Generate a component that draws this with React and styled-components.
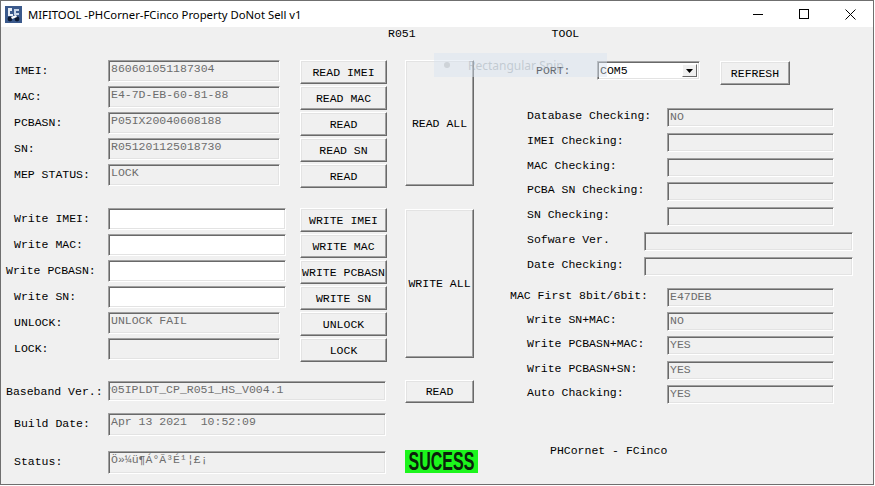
import styled, { createGlobalStyle } from "styled-components";

const GlobalStyle = createGlobalStyle`
  html, body {
    margin: 0;
    padding: 0;
    background: #ffffff;
  }
`;

const Window = styled.div`
  width: 874px;
  height: 485px;
  box-sizing: border-box;
  border: 1px solid #6f6f6f;
  display: flex;
  flex-direction: column;
  background: #f0f0f0;
  overflow: hidden;
`;

const TitleBar = styled.div`
  height: 26px;
  flex: none;
  background: #ffffff;
  display: flex;
  align-items: center;
  font-family: "Noto Sans", "Open Sans", sans-serif;
  font-size: 11.3px;
  color: #000;
`;

const AppIcon = styled.svg`
  width: 17px;
  height: 17px;
  margin: 0 6px 0 4px;
  flex: none;
`;

const TitleText = styled.span`
  flex: 1;
  white-space: nowrap;
`;

const Controls = styled.div`
  display: flex;
  height: 100%;
`;

const ControlButton = styled.div`
  width: 46px;
  height: 100%;
  display: flex;
  align-items: center;
  justify-content: center;
`;

const Body = styled.div`
  flex: 1;
  position: relative;
  font-family: "Liberation Mono", "DejaVu Sans Mono", monospace;
  font-size: 11.5px;
  color: #000;
`;

const HeaderRow = styled.div`
  height: 33px;
  display: flex;
  gap: 136px;
  padding-left: 387px;
  line-height: 14px;
`;

const Main = styled.div`
  display: flex;
  align-items: flex-start;
`;

const Column = styled.div`
  display: flex;
  flex-direction: column;
  width: ${({ $width }) => ($width ? `${$width}px` : "auto")};
  margin-left: ${({ $offset }) => $offset || 0}px;
  flex: none;
`;

const Group = styled.div`
  display: flex;
  flex-direction: column;
  gap: ${({ $gap }) => $gap}px;
  margin-top: ${({ $top }) => $top || 0}px;
`;

const FormRow = styled.div`
  display: grid;
  grid-template-columns: 107px 192px 87px;
  height: 23px;
  align-items: start;
  margin-top: ${({ $top }) => $top || 0}px;
`;

const Label = styled.span`
  padding-left: ${({ $indent }) => ($indent ?? 13)}px;
  line-height: 21px;
  white-space: pre;
`;

const Field = styled.div`
  width: ${({ $width }) => $width}px;
  height: ${({ $height }) => $height || 22}px;
  box-sizing: border-box;
  border-style: solid;
  border-width: 1px;
  border-color: #a0a0a0 #ffffff #ffffff #a0a0a0;
  box-shadow: inset 1px 1px 0 #696969, inset -1px -1px 0 #e3e3e3;
  background: ${({ $editable }) => ($editable ? "#ffffff" : "#f0f0f0")};
  color: #6d6d6d;
  padding: 1px 0 0 2px;
  line-height: 14px;
  white-space: pre;
  overflow: hidden;
  text-indent: ${({ $shift }) => $shift || 0}px;
`;

const Button = styled.div`
  width: ${({ $width }) => $width || 87}px;
  height: ${({ $height }) => $height || 24}px;
  box-sizing: border-box;
  border-style: solid;
  border-width: 1px;
  border-color: #ffffff #696969 #696969 #ffffff;
  box-shadow: inset -1px -1px 0 #a0a0a0, inset 1px 1px 0 #e3e3e3;
  background: #f0f0f0;
  display: flex;
  align-items: center;
  justify-content: center;
  white-space: pre;
  margin-top: ${({ $top }) => $top || 0}px;
`;

const Success = styled.div`
  width: 73px;
  height: 23px;
  margin-top: ${({ $top }) => $top || 0}px;
  background: #1cf51c;
  display: flex;
  align-items: center;
  justify-content: center;
`;

const SuccessText = styled.span`
  font-family: "Liberation Sans", "DejaVu Sans", sans-serif;
  font-weight: bold;
  font-size: 25px;
  line-height: 23px;
  color: #0b200b;
  transform: scaleX(0.64);
  transform-origin: center;
  white-space: nowrap;
`;

const SideRow = styled.div`
  display: grid;
  grid-template-columns: ${({ $label }) => $label || 166}px auto;
  height: 19px;
  align-items: start;
`;

const SideLabel = styled.span`
  padding-left: ${({ $indent }) => ($indent ?? 26)}px;
  line-height: 15px;
  white-space: pre;
`;

const PortRow = styled.div`
  display: flex;
  align-items: flex-start;
  height: 24px;
  margin-top: 1px;
`;

const PortLabel = styled.span`
  width: 61px;
  padding-left: 35px;
  line-height: 19px;
`;

const Select = styled.div`
  width: 103px;
  height: 19px;
  box-sizing: border-box;
  border-style: solid;
  border-width: 1px;
  border-color: #a0a0a0 #ffffff #ffffff #a0a0a0;
  box-shadow: inset 1px 1px 0 #696969, inset -1px -1px 0 #e3e3e3;
  background: #ffffff;
  display: flex;
  align-items: stretch;
  padding: 2px;
  margin-right: 20px;
`;

const SelectValue = styled.span`
  flex: 1;
  line-height: 13px;
`;

const SelectArrow = styled.span`
  width: 15px;
  box-sizing: border-box;
  border-style: solid;
  border-width: 1px;
  border-color: #ffffff #696969 #696969 #ffffff;
  background: #f0f0f0;
  display: flex;
  align-items: center;
  justify-content: center;
`;

const Credit = styled.div`
  margin-top: 40px;
  padding-left: 49px;
  line-height: 14px;
`;

const SnipGhost = styled.div`
  position: absolute;
  left: 433px;
  top: 26px;
  width: 173px;
  height: 24px;
  background: rgba(214, 226, 240, 0.45);
  font-family: "Noto Sans", sans-serif;
  font-size: 12px;
  color: rgba(160, 170, 180, 0.5);
  display: flex;
  align-items: center;
  gap: 18px;
  padding-left: 10px;
  box-sizing: border-box;
  pointer-events: none;
`;

const GhostDot = styled.span`
  width: 6px;
  height: 6px;
  border-radius: 50%;
  background: rgba(190, 195, 200, 0.6);
`;

const readRows = [
  ["IMEI:", "860601051187304", "READ IMEI"],
  ["MAC:", "E4-7D-EB-60-81-88", "READ MAC"],
  ["PCBASN:", "P05IX20040608188", "READ"],
  ["SN:", "R051201125018730", "READ SN"],
  ["MEP STATUS:", "LOCK", "READ"],
];

const writeRows = [
  ["Write IMEI:", 13, "", true, "WRITE IMEI"],
  ["Write MAC:", 13, "", true, "WRITE MAC"],
  ["Write PCBASN:", 5, "", true, "WRITE PCBASN"],
  ["Write SN:", 13, "", true, "WRITE SN"],
  ["UNLOCK:", 13, "UNLOCK FAIL", false, "UNLOCK"],
  ["LOCK:", 13, "", false, "LOCK"],
];

const checkRows = [
  ["Database Checking:", "NO"],
  ["IMEI Checking:", ""],
  ["MAC Checking:", ""],
  ["PCBA SN Checking:", ""],
  ["SN Checking:", ""],
];

const writeFlags = [
  ["Write SN+MAC:", "NO"],
  ["Write PCBASN+MAC:", "YES"],
  ["Write PCBASN+SN:", "YES"],
  ["Auto Chacking:", "YES"],
];

export default function App() {
  return (
    <>
      <GlobalStyle />
      <Window>
        <TitleBar>
          <AppIcon viewBox="0 0 17 17">
            <rect x="0" y="0" width="17" height="17" fill="#3b5a8c" />
            <path d="M3 2h4v3H5v3h3v2H3z" fill="#e8eef6" />
            <path d="M9 3h5v2h-3v2h3v2H9z" fill="#c9d6e8" />
            <circle cx="5" cy="13" r="2.4" fill="#0c1a33" />
            <circle cx="12" cy="13" r="2.4" fill="#0c1a33" />
            <path d="M6 11l5-2 1 2-5 2z" fill="#ffffff" />
          </AppIcon>
          <TitleText>MIFITOOL -PHCorner-FCinco Property DoNot Sell v1</TitleText>
          <Controls>
            <ControlButton>
              <svg width="10" height="10" viewBox="0 0 10 10">
                <path d="M0 5.5h10" stroke="#000" strokeWidth="1" />
              </svg>
            </ControlButton>
            <ControlButton>
              <svg width="10" height="10" viewBox="0 0 10 10">
                <rect x="0.5" y="0.5" width="9" height="9" fill="none" stroke="#000" strokeWidth="1" />
              </svg>
            </ControlButton>
            <ControlButton>
              <svg width="11" height="11" viewBox="0 0 11 11">
                <path d="M0.5 0.5l10 10M10.5 0.5l-10 10" stroke="#000" strokeWidth="1" />
              </svg>
            </ControlButton>
          </Controls>
        </TitleBar>

        <Body>
          <SnipGhost>
            <GhostDot />
            Rectangular Snip
          </SnipGhost>

          <HeaderRow>
            <span>R051</span>
            <span>TOOL</span>
          </HeaderRow>

          <Main>
            <Column $width={404}>
              <Group $gap={3}>
                {readRows.map(([label, value, action]) => (
                  <FormRow key={label}>
                    <Label>{label}</Label>
                    <Field $width={172}>{value}</Field>
                    <Button>{action}</Button>
                  </FormRow>
                ))}
              </Group>

              <Group $gap={3} $top={21}>
                {writeRows.map(([label, indent, value, editable, action]) => (
                  <FormRow key={label}>
                    <Label $indent={indent}>{label}</Label>
                    <Field $width={editable ? 178 : 172} $editable={editable}>
                      {value}
                    </Field>
                    <Button>{action}</Button>
                  </FormRow>
                ))}
              </Group>

              <FormRow $top={20}>
                <Label $indent={5}>Baseband Ver.:</Label>
                <Field $width={278} $height={20} $shift={-7}>
                  P05IPLDT_CP_R051_HS_V004.1
                </Field>
              </FormRow>
              <FormRow $top={9}>
                <Label>Build Date:</Label>
                <Field $width={278} $height={23}>
                  Apr 13 2021  10:52:09
                </Field>
              </FormRow>
              <FormRow $top={15}>
                <Label>Status:</Label>
                <Field $width={278} $height={23}>
                  Ö»¼ü¶Á°Ã³É¹¦£¡
                </Field>
              </FormRow>
            </Column>

            <Column $width={73}>
              <Button $width={69} $height={126}>READ ALL</Button>
              <Button $width={69} $height={149} $top={23}>WRITE ALL</Button>
              <Button $width={69} $height={23} $top={22}>READ</Button>
              <Success $top={47}>
                <SuccessText>SUCESS</SuccessText>
              </Success>
            </Column>

            <Column $offset={23}>
              <PortRow>
                <PortLabel>PORT:</PortLabel>
                <Select>
                  <SelectValue>COM5</SelectValue>
                  <SelectArrow>
                    <svg width="7" height="4" viewBox="0 0 7 4">
                      <path d="M0 0h7L3.5 4z" fill="#000" />
                    </svg>
                  </SelectArrow>
                </Select>
                <Button $width={70} $height={24}>REFRESH</Button>
              </PortRow>

              <Group $gap={5.8} $top={23}>
                {checkRows.map(([label, value]) => (
                  <SideRow key={label}>
                    <SideLabel>{label}</SideLabel>
                    <Field $width={167} $height={19}>{value}</Field>
                  </SideRow>
                ))}
                <SideRow $label={143}>
                  <SideLabel>Sofware Ver.</SideLabel>
                  <Field $width={209} $height={19} />
                </SideRow>
                <SideRow $label={143}>
                  <SideLabel>Date Checking:</SideLabel>
                  <Field $width={209} $height={19} />
                </SideRow>
              </Group>

              <Group $gap={5.25} $top={12}>
                <SideRow>
                  <SideLabel $indent={9}>MAC First 8bit/6bit:</SideLabel>
                  <Field $width={167} $height={19}>E47DEB</Field>
                </SideRow>
                {writeFlags.map(([label, value]) => (
                  <SideRow key={label}>
                    <SideLabel>{label}</SideLabel>
                    <Field $width={167} $height={19}>{value}</Field>
                  </SideRow>
                ))}
              </Group>

              <Credit>PHCornet - FCinco</Credit>
            </Column>
          </Main>
        </Body>
      </Window>
    </>
  );
}
